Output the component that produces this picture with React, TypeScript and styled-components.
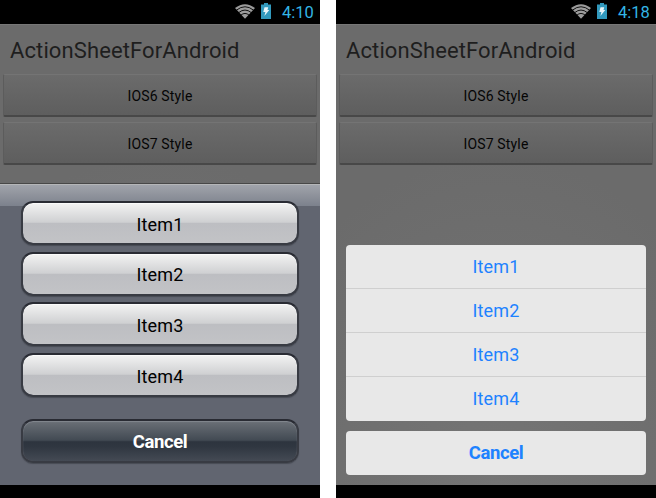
import React from 'react';
import styled, { createGlobalStyle } from 'styled-components';

const GlobalStyle = createGlobalStyle`
  * { box-sizing: border-box; }
  body { margin: 0; background: #fff; font-family: Roboto, "Noto Sans", sans-serif; }
  button { font-family: inherit; margin: 0; padding: 0; cursor: pointer; }
`;

const Page = styled.main`
  display: flex;
  gap: 16px;
  width: 656px;
  height: 498px;
  overflow: hidden;
`;

const Phone = styled.section`
  display: flex;
  flex-direction: column;
  flex: 0 0 320px;
  height: 498px;
  background: #000;
`;

const StatusBar = styled.header`
  display: flex;
  flex: 0 0 24px;
  justify-content: flex-end;
  align-items: flex-start;
  padding: 3px 6px 0 0;
`;

const WifiIcon = styled.svg`
  width: 20px;
  height: 15px;
  margin: 1px 6px 0 0;
`;

const BatteryIcon = styled.svg`
  width: 10px;
  height: 16px;
  margin-right: 11px;
`;

const Clock = styled.time`
  width: 32px;
  color: #33b5e5;
  font-size: 16.5px;
  line-height: 19px;
  letter-spacing: 0;
  white-space: nowrap;
`;

const Screen = styled.div`
  display: flex;
  flex-direction: column;
  height: 461px;
  background: radial-gradient(ellipse 260px 330px at 50% 100%, #757575, #6e6e6e 70%, #6b6b6b);
  border-top: 1px solid #777;
`;

const Title = styled.h1`
  flex: 0 0 49px;
  min-height: 0;
  margin: 0;
  padding-left: 10px;
  color: #1e1e1e;
  font-size: 22px;
  font-weight: 400;
  line-height: 52px;
  letter-spacing: 0.11px;
  white-space: nowrap;
`;

const StyleButtons = styled.div`
  display: flex;
  flex-direction: column;
  gap: 5px;
  padding: 0 3px;
`;

const StyleButton = styled.button`
  height: 43px;
  border: 1px solid #5c5c5c;
  border-top-color: #747474;
  border-bottom: 2px solid #484848;
  border-radius: 2px;
  background: linear-gradient(#6b6b6b, #5e5e5e);
  color: #050505;
  font-size: 14px;
  letter-spacing: 0.15px;
  padding-top: 1px;
`;

const ClassicSheet = styled.div`
  display: flex;
  flex-direction: column;
  gap: 6.7px;
  height: 302px;
  margin-top: auto;
  padding: 17px 21px 0;
  border-top: 1px solid #484848;
  background:
    linear-gradient(#b5b6b8, #b5b6b8) 0 0 / 100% 1px no-repeat,
    linear-gradient(#a2a5ac, #7c818c) 0 0 / 100% 22px no-repeat,
    #616570;
`;

const GlossButton = styled.button<{ $cancel?: boolean }>`
  flex: 0 0 44px;
  margin-top: ${p => (p.$cancel ? '15.2px' : '0')};
  padding-top: 2px;
  border: 2px solid #383b43;
  border-top-color: #292b33;
  border-radius: 12px;
  background: ${p => p.$cancel
    ? 'linear-gradient(#6b7077, #424a53 48%, #2d343e 52%, #303741 65%, #444a54) padding-box'
    : 'linear-gradient(#f3f3f3, #cfd0d2 48%, #bdbec2 51%, #c2c3c6) padding-box'};
  box-shadow: 0 1px 1px #474b54${p => (p.$cancel ? ', inset 0 1px 1px #838890' : ', inset 0 1px 0 #fafafa')};
  color: ${p => (p.$cancel ? '#fff' : '#000')};
  font-size: ${p => (p.$cancel ? '18.5px' : '18px')};
  font-weight: ${p => (p.$cancel ? 700 : 400)};
  letter-spacing: ${p => (p.$cancel ? '-0.4px' : '0.15px')};
`;

const FlatSheet = styled.div`
  display: flex;
  flex-direction: column;
  gap: 10px;
  margin-top: auto;
  padding: 0 10px 10px;
`;

const FlatGroup = styled.div`
  display: flex;
  flex-direction: column;
  overflow: hidden;
  border-radius: 4px;
  background: #e8e8e8;
`;

const FlatButton = styled.button<{ $cancel?: boolean }>`
  height: 44px;
  border: 0;
  border-bottom: 1px solid #cfcfcf;
  background: transparent;
  color: #1e82ff;
  font-size: ${p => (p.$cancel ? '18.5px' : '18px')};
  font-weight: ${p => (p.$cancel ? 700 : 400)};
  letter-spacing: ${p => (p.$cancel ? '-0.4px' : '0.15px')};

  &:last-child { border-bottom-color: transparent; }
`;

const items = ['Item1', 'Item2', 'Item3', 'Item4'];

function Status({ time }: { time: string }) {
  return (
    <StatusBar>
      <WifiIcon viewBox="0 0 20 15" fill="none">
        <path d="M0 4Q10-3.6 20 4L10 14.8Z" fill="#9c9c9c" />
        <path d="M1.4 6.2Q10-.7 18.6 6.2M3.6 8.7Q10 3.4 16.4 8.7M5.8 11.2Q10 7.7 14.2 11.2" stroke="#000" strokeWidth=".9" />
      </WifiIcon>
      <BatteryIcon viewBox="0 0 10 16">
        <path d="M3 0H7V1.5H10V16H0V1.5H3Z" fill="#3299bd" />
        <path d="M3.5 4.2H7.2L6.5 7H8.3L3.4 13L4.4 9H2.3Z" fill="#e9f5f9" />
      </BatteryIcon>
      <Clock>{time}</Clock>
    </StatusBar>
  );
}

function Device({ time, children }: { time: string; children: React.ReactNode }) {
  return (
    <Phone>
      <Status time={time} />
      <Screen>
        <Title>ActionSheetForAndroid</Title>
        <StyleButtons>
          <StyleButton>IOS6 Style</StyleButton>
          <StyleButton>IOS7 Style</StyleButton>
        </StyleButtons>
        {children}
      </Screen>
    </Phone>
  );
}

export default function App() {
  return (
    <>
      <GlobalStyle />
      <Page>
        <Device time="4:10">
          <ClassicSheet>
            {items.map(item => <GlossButton key={item}>{item}</GlossButton>)}
            <GlossButton $cancel>Cancel</GlossButton>
          </ClassicSheet>
        </Device>
        <Device time="4:18">
          <FlatSheet>
            <FlatGroup>
              {items.map(item => <FlatButton key={item}>{item}</FlatButton>)}
            </FlatGroup>
            <FlatGroup><FlatButton $cancel>Cancel</FlatButton></FlatGroup>
          </FlatSheet>
        </Device>
      </Page>
    </>
  );
}
